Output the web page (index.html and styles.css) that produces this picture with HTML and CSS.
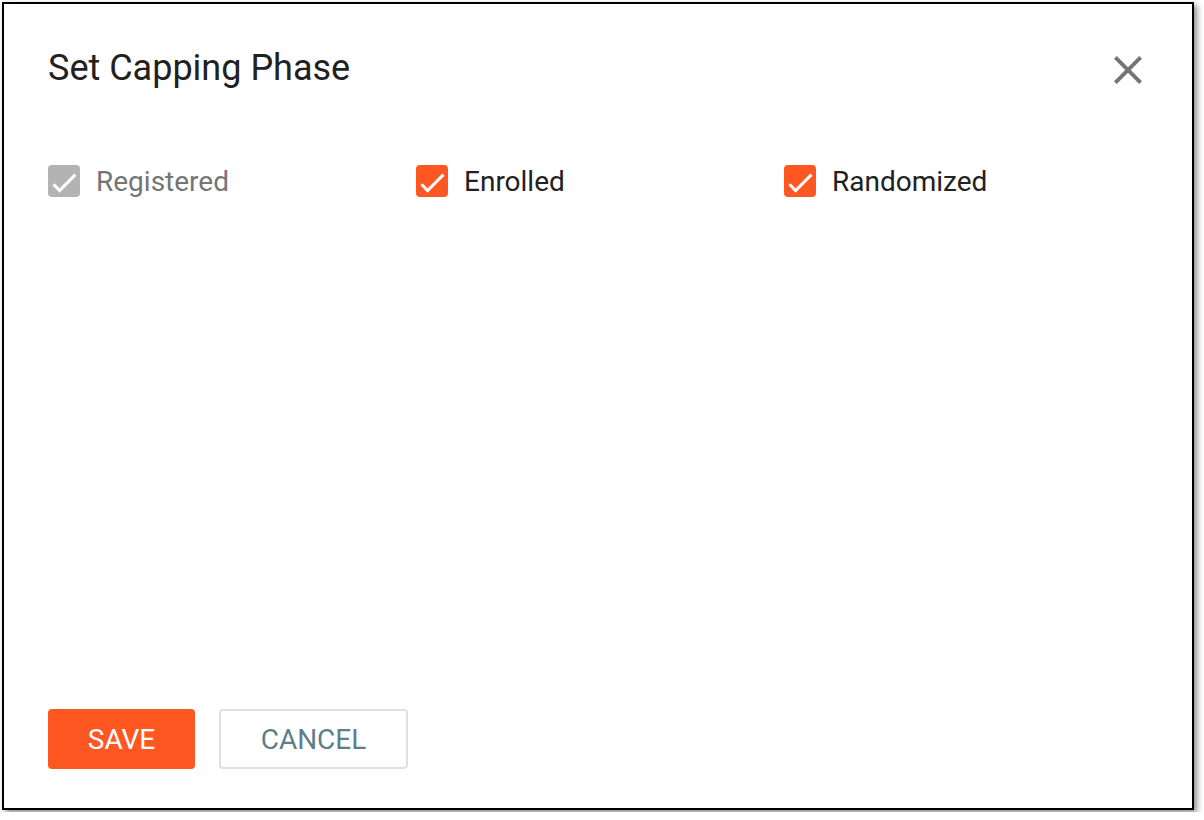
FILE: index.html
```html
<!DOCTYPE html>
<html lang="en">
<head>
  <meta charset="UTF-8">
  <meta name="viewport" content="width=device-width, initial-scale=1.0">
  <title>Set Capping Phase</title>
  <link rel="stylesheet" href="styles.css">
</head>
<body>
  <div class="dialog">
    <div class="dialog-header">
      <h2 class="dialog-title">Set Capping Phase</h2>
      <button class="close-button" aria-label="Close">
        <svg viewBox="0 0 24 24" width="48" height="48"><path d="M19 6.41L17.59 5 12 10.59 6.41 5 5 6.41 10.59 12 5 17.59 6.41 19 12 13.41 17.59 19 19 17.59 13.41 12z"/></svg>
      </button>
    </div>
    <div class="phase-list">
      <label class="phase-option disabled">
        <span class="check-box">
          <svg viewBox="0 0 32 32" width="32" height="32"><path d="M5.5 19.3 L11.6 25.6 L27.4 9.6"/></svg>
        </span>
        <span class="phase-label">Registered</span>
      </label>
      <label class="phase-option">
        <span class="check-box">
          <svg viewBox="0 0 32 32" width="32" height="32"><path d="M5.5 19.3 L11.6 25.6 L27.4 9.6"/></svg>
        </span>
        <span class="phase-label">Enrolled</span>
      </label>
      <label class="phase-option">
        <span class="check-box">
          <svg viewBox="0 0 32 32" width="32" height="32"><path d="M5.5 19.3 L11.6 25.6 L27.4 9.6"/></svg>
        </span>
        <span class="phase-label">Randomized</span>
      </label>
    </div>
    <div class="dialog-actions">
      <button class="save-button">SAVE</button>
      <button class="cancel-button">CANCEL</button>
    </div>
  </div>
</body>
</html>
```
FILE: styles.css
```css
body {
  margin: 0;
  background: #fff;
  font-family: Roboto, "Liberation Sans", sans-serif;
}

.dialog {
  box-sizing: border-box;
  width: 1192px;
  height: 808px;
  margin: 2px;
  border: 2px solid #000;
  background: #fff;
  box-shadow: 3px 3px 6px rgba(0, 0, 0, 0.45);
  padding: 42px 40px 39px 44px;
  display: flex;
  flex-direction: column;
}

.dialog-header {
  display: flex;
  justify-content: space-between;
  align-items: center;
  height: 48px;
}

.dialog-title {
  margin: 0 0 3px;
  font-size: 36px;
  font-weight: 400;
  line-height: 1.2;
  color: #212121;
}

.close-button {
  width: 48px;
  height: 48px;
  padding: 0;
  border: none;
  background: none;
  cursor: pointer;
}

.close-button svg {
  display: block;
  fill: #757575;
}

.phase-list {
  display: grid;
  grid-template-columns: repeat(3, 368px);
  margin-top: 71px;
}

.phase-option {
  display: flex;
  align-items: center;
  gap: 16px;
  height: 32px;
  cursor: pointer;
}

.check-box {
  width: 32px;
  height: 32px;
  border-radius: 4px;
  background: #ff5722;
}

.check-box svg {
  display: block;
  fill: none;
  stroke: #fff;
  stroke-width: 3;
}

.phase-label {
  font-size: 28px;
  color: #212121;
}

.phase-option.disabled .check-box {
  background: #b3b3b3;
}

.phase-option.disabled .phase-label {
  color: #757575;
}

.dialog-actions {
  margin-top: auto;
  display: flex;
  gap: 24px;
}

.save-button,
.cancel-button {
  height: 60px;
  border-radius: 4px;
  font-family: Roboto, "Liberation Sans", sans-serif;
  font-size: 28px;
  cursor: pointer;
}

.save-button {
  width: 147px;
  border: none;
  background: #ff5722;
  color: #fff;
}

.cancel-button {
  width: 189px;
  border: 2px solid #e0e0e0;
  background: #fff;
  color: #607d8b;
}
```
